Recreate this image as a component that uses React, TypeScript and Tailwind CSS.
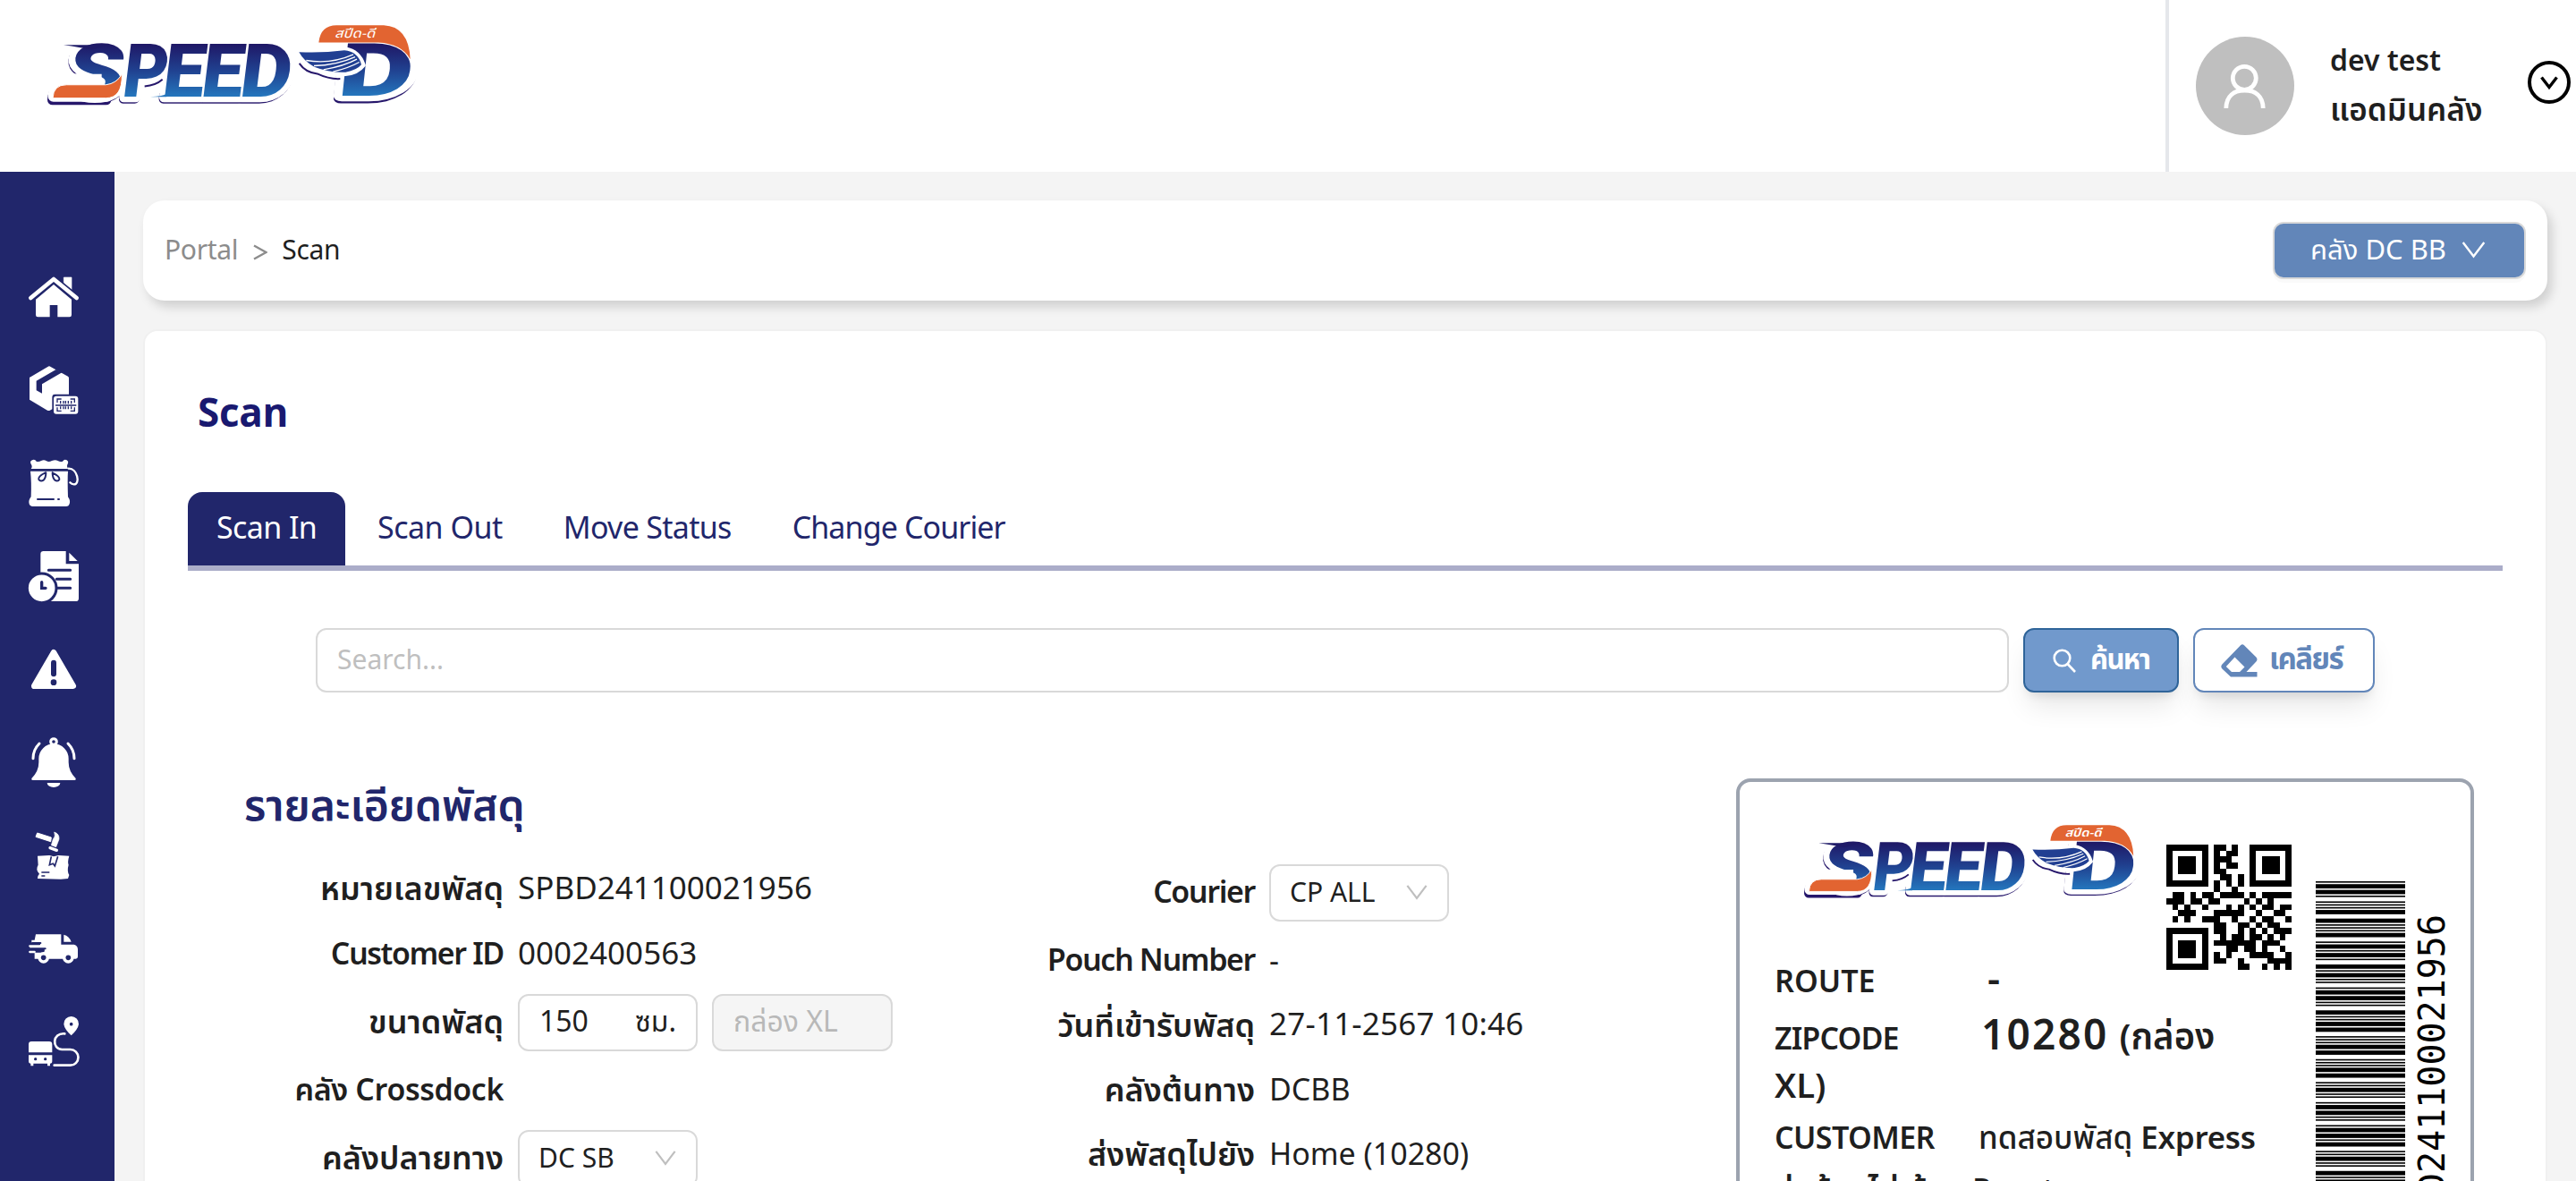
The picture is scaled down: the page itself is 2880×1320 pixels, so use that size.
import type { ReactNode } from "react";

/* ---------- Code 39 barcode ---------- */

const CODE39: Record<string, string> = {
  "0": "nnnwwnwnn", "1": "wnnwnnnnw", "2": "nnwwnnnnw", "3": "wnwwnnnnn", "4": "nnnwwnnnw",
  "5": "wnnwwnnnn", "6": "nnwwwnnnn", "7": "nnnwnnwnw", "8": "wnnwnnwnn", "9": "nnwwnnwnn",
  B: "nnwnnwnnw", D: "nnnnwwnnw", P: "nnwnwnnwn", S: "nnwnnnwwn", "*": "nwnnwnwnn",
};

function code39Bars(value: string) {
  const bars: { at: number; size: number }[] = [];
  let at = 0;
  for (const ch of `*${value}*`) {
    [...CODE39[ch]].forEach((kind, i) => {
      const size = kind === "w" ? 3 : 1;
      if (i % 2 === 0) bars.push({ at, size });
      at += size;
    });
    at += 1;
  }
  return { bars, total: at - 1 };
}

function Barcode({ value }: { value: string }) {
  const { bars, total } = code39Bars(value);
  return (
    <svg className="h-[460px] w-[100px] shrink-0" viewBox={`0 0 100 ${total}`} preserveAspectRatio="none">
      {bars.map((b) => (
        <rect key={b.at} x="0" width="100" y={total - b.at - b.size} height={b.size} fill="#000" />
      ))}
    </svg>
  );
}

/* ---------- QR code, version 1-Q, alphanumeric ---------- */

const ALNUM = "0123456789ABCDEFGHIJKLMNOPQRSTUVWXYZ $%*+-./:";
const FORMAT_BITS = "011010101011111";

function qrMatrix(text: string): boolean[][] {
  let bits = "0010" + text.length.toString(2).padStart(9, "0");
  for (let i = 0; i < text.length; i += 2) {
    const a = ALNUM.indexOf(text[i]);
    const b = ALNUM.indexOf(text[i + 1]);
    bits += (a * 45 + b).toString(2).padStart(11, "0");
  }
  bits = bits.padEnd(104, "0");
  const data: number[] = [];
  for (let i = 0; i < 104; i += 8) data.push(parseInt(bits.slice(i, i + 8), 2));

  const mul = (x: number, y: number) => {
    let z = 0;
    for (let i = 7; i >= 0; i--) {
      z = (z << 1) ^ ((z >>> 7) * 0x11d);
      z ^= ((y >>> i) & 1) * x;
    }
    return z;
  };
  const degree = 13;
  const divisor: number[] = Array(degree).fill(0);
  divisor[degree - 1] = 1;
  let root = 1;
  for (let i = 0; i < degree; i++) {
    for (let j = 0; j < degree; j++) {
      divisor[j] = mul(divisor[j], root);
      if (j + 1 < degree) divisor[j] ^= divisor[j + 1];
    }
    root = mul(root, 2);
  }
  const ecc: number[] = Array(degree).fill(0);
  for (const byte of data) {
    const factor = byte ^ (ecc.shift() as number);
    ecc.push(0);
    divisor.forEach((c, i) => (ecc[i] ^= mul(c, factor)));
  }
  const stream = [...data, ...ecc].map((b) => b.toString(2).padStart(8, "0")).join("");

  const n = 21;
  const m: (boolean | null)[][] = Array.from({ length: n }, () => Array(n).fill(null));
  const finder = (cr: number, cc: number) => {
    for (let dr = -4; dr <= 4; dr++)
      for (let dc = -4; dc <= 4; dc++) {
        const r = cr + dr;
        const c = cc + dc;
        if (r < 0 || c < 0 || r >= n || c >= n) continue;
        const d = Math.max(Math.abs(dr), Math.abs(dc));
        m[r][c] = d !== 2 && d !== 4;
      }
  };
  finder(3, 3);
  finder(3, n - 4);
  finder(n - 4, 3);
  for (let i = 8; i < 13; i++) m[6][i] = m[i][6] = i % 2 === 0;
  const f = (i: number) => FORMAT_BITS[14 - i] === "1";
  for (let i = 0; i <= 5; i++) m[i][8] = f(i);
  m[7][8] = f(6);
  m[8][8] = f(7);
  m[8][7] = f(8);
  for (let i = 9; i < 15; i++) m[8][14 - i] = f(i);
  for (let i = 0; i < 8; i++) m[8][n - 1 - i] = f(i);
  for (let i = 8; i < 15; i++) m[n - 15 + i][8] = f(i);
  m[n - 8][8] = true;

  let k = 0;
  for (let right = n - 1; right >= 1; right -= 2) {
    if (right === 6) right = 5;
    for (let v = 0; v < n; v++) {
      for (let j = 0; j < 2; j++) {
        const c = right - j;
        const upward = ((right + 1) & 2) === 0;
        const r = upward ? n - 1 - v : v;
        if (m[r][c] === null) {
          m[r][c] = (stream[k] === "1") !== ((r + c) % 2 === 0);
          k++;
        }
      }
    }
  }
  return m as boolean[][];
}

function QrCode({ value }: { value: string }) {
  const d = qrMatrix(value)
    .flatMap((row, y) => row.map((on, x) => (on ? `M${x} ${y}h1v1h-1z` : "")))
    .join("");
  return (
    <svg className="size-[140px] shrink-0" viewBox="0 0 21 21" shapeRendering="crispEdges">
      <path d={d} fill="#000" />
    </svg>
  );
}

/* ---------- Logo ---------- */

function LogoWord(props: { fill: string; stroke?: string; strokeWidth?: number; clipPath?: string }) {
  const font = { fontFamily: "Roboto, 'Noto Sans', sans-serif", fontWeight: 900 };
  return (
    <g {...props} {...font} fontSize="250" strokeLinejoin="round">
      <g transform="translate(0 293) skewX(-7)">
        <text transform="translate(102 0) scale(1.2 1)">S</text>
        <text transform="translate(286 0) scale(.92 1)">P</text>
        <text transform="translate(420 0)">E</text>
        <text transform="translate(550 0)">E</text>
        <text transform="translate(680 0) scale(1.06 1)">D</text>
      </g>
      <g transform="translate(0 291) skewX(-6)">
        <text transform="translate(1008 0) scale(1.56 .99)">D</text>
      </g>
    </g>
  );
}

function Logo({ id, className }: { id: string; className: string }) {
  const top = "M950 112Q956 54 1010 54H1168Q1252 58 1257 168Q1228 116 1150 112Z";
  return (
    <svg className={className} viewBox="40 50 1236 274" preserveAspectRatio="none">
      <defs>
        <linearGradient id={id} gradientUnits="userSpaceOnUse" x1="0" x2="0" y1="-178" y2="0">
          <stop offset="0" stopColor="#1f1765" />
          <stop offset=".5" stopColor="#20408f" />
          <stop offset="1" stopColor="#2476bd" />
        </linearGradient>
        <clipPath id={`${id}-inner`}>
          <path d="M180 90H835V283H180ZM1070 110H1205V283H1070Z" />
        </clipPath>
      </defs>
      <g transform="translate(-3 8)">
        <LogoWord fill="#26176b" stroke="#26176b" strokeWidth={34} />
        <path d="M60 297Q62 255 100 255H240V297Z" fill="#26176b" stroke="#26176b" strokeWidth="34" strokeLinejoin="round" />
      </g>
      <LogoWord fill="#fff" stroke="#fff" strokeWidth={38} />
      <LogoWord fill="#fff" stroke="#fff" strokeWidth={80} clipPath={`url(#${id}-inner)`} />
      <path d="M60 293Q62 251 100 251H240V293Z" fill="#fff" stroke="#fff" strokeWidth="36" strokeLinejoin="round" />
      <path d="M366 259Q404 256 426 236" fill="none" stroke="#26176b" strokeWidth="6" />
      <path d={top} fill="#fff" stroke="#fff" strokeWidth="24" />
      <LogoWord fill={`url(#${id})`} />
      <path d="M96 218H222V256H96Z" fill="#fff" />
      <path d="M94 120H240L190 136Q150 128 94 120Z" fill="#1f1b68" />
      <path d="M58 299Q60 254 104 254H236Q272 250 290 218Q292 299 236 299Z" fill="#e26431" stroke="#fff" strokeWidth="3" />
      <path d="M385 295Q430 292 440 284V295Z" fill="#2476bd" />
      <path d={top} fill="#e26431" />
      <text x="1003" y="95" fontSize="42" fontStyle="italic" fill="#fff" fontFamily="'Noto Sans Thai', 'Noto Sans', sans-serif" textLength="136" lengthAdjust="spacingAndGlyphs">
        สปีด-ดี
      </text>
      <path d="M872 138Q960 144 1040 134Q1085 142 1100 188Q1080 214 1040 218Q985 222 930 200Q892 178 872 138Z" fill="#fff" stroke="#fff" strokeWidth="14" />
      <path d="M884 144Q960 148 1036 138Q1082 142 1093 186Q1078 204 1040 212Q985 214 935 194Q900 174 884 144Z" fill="#213f92" />
      <path d="M908 172Q990 186 1066 152M934 190Q1010 188 1072 160M966 203Q1034 192 1078 168M998 210Q1050 198 1086 178" fill="none" stroke="#fff" strokeWidth="4" />
      <path d="M885 182Q905 212 945 217Q985 236 1022 234" fill="none" stroke="#26176b" strokeWidth="6" />
    </svg>
  );
}

/* ---------- Sidebar icons, drawn on a 168 unit box ---------- */

const NAVY = "#21266b";

const sidebarIcons: { name: string; art: ReactNode }[] = [
  {
    name: "Home",
    art: (
      <>
        <path d="M118 18H144V60L118 38Z" stroke="#fff" strokeWidth="2" strokeLinejoin="round" />
        <path d="M7 87L84 24L161 87" fill="none" stroke={NAVY} strokeWidth="24" strokeLinejoin="round" />
        <path d="M24 92L84 42L144 92V144Q144 151 137 151H97V111H71V151H31Q24 151 24 144Z" />
        <path d="M7 87L84 24L161 87" fill="none" stroke="#fff" strokeWidth="14" strokeLinecap="round" strokeLinejoin="round" />
      </>
    ),
  },
  {
    name: "Parcel scan",
    art: (
      <>
        <path d="M3 42L64 6Q69 2 74 6L132 38Q135 40 135 44V98H88Q79 98 79 108V148L70 153Q67 154 63 152L3 116Z" />
        <path d="M26 53L92 15L112 25L45 64V95L26 85Z" fill={NAVY} />
        <rect x="84" y="104" width="82" height="60" rx="9" />
        <path d="M96 126V114H110M140 114H154V126M154 142V154H140M110 154H96V142M90 135H160M107 120V130M117 120V130M124 120V130M133 120V130M143 120V130M107 139V148M117 139V148M124 139V148M133 139V148M143 139V148" fill="none" stroke={NAVY} strokeWidth="4" />
      </>
    ),
  },
  {
    name: "Pouch",
    art: (
      <>
        <path d="M8 36Q14 28 8 20Q2 10 14 6Q22 4 26 11Q34 14 42 9Q52 4 60 10Q68 14 78 9Q90 4 98 9Q106 14 114 11Q120 2 128 7Q136 12 130 22Q126 28 132 36Z" />
        <path d="M6 44H132Q130 70 132 130Q142 144 136 156Q134 162 126 162H12Q4 162 2 154Q-2 142 8 130Q10 80 6 44Z" />
        <path d="M134 35C164 34 174 88 152 88Q144 88 139 82" fill="none" stroke="#fff" strokeWidth="7" strokeLinecap="round" />
        <path d="M56 49Q30 62 34 72Q40 80 50 74Q58 66 58 49M80 49Q106 62 103 72Q98 80 88 74Q80 66 80 49M30 138H84M99 138H102" fill="none" stroke={NAVY} strokeWidth="6" strokeLinecap="round" />
      </>
    ),
  },
  {
    name: "Report",
    art: (
      <>
        <path d="M50 0H125V43H168V158Q168 168 158 168H40V10Q40 0 50 0Z" />
        <path d="M136 5L164 33H136Z" />
        <path d="M67 64H140M94 94H140M94 124H140" stroke={NAVY} strokeWidth="9" strokeLinecap="round" />
        <circle cx="44" cy="124" r="49" stroke={NAVY} strokeWidth="9" />
        <path d="M44 104V124H57" fill="none" stroke={NAVY} strokeWidth="10" strokeLinecap="round" />
      </>
    ),
  },
  {
    name: "Warning",
    art: (
      <>
        <path d="M84 28L149 140H19Z" stroke="#fff" strokeWidth="20" strokeLinejoin="round" />
        <path d="M84 62V100" stroke={NAVY} strokeWidth="18" strokeLinecap="round" />
        <circle cx="84" cy="128" r="10" fill={NAVY} />
      </>
    ),
  },
  {
    name: "Alerts",
    art: (
      <>
        <circle cx="84" cy="15" r="10" fill="none" stroke="#fff" strokeWidth="9" />
        <path d="M10 138Q34 114 34 84V72A50 50 0 0 1 134 72V84Q134 114 158 138Q160 144 154 144H14Q8 144 10 138Z" />
        <path d="M62 153H106A22 15 0 0 1 62 153Z" />
        <path d="M36 21Q15 42 15 71M132 21Q153 42 153 71" fill="none" stroke="#fff" strokeWidth="9" strokeLinecap="round" />
      </>
    ),
  },
  {
    name: "Damaged parcel",
    art: (
      <>
        <path d="M29 9L76 24L74 38L24 22Z" stroke="#fff" strokeWidth="3" strokeLinejoin="round" />
        <path d="M86 6Q104 12 102 30L92 56L76 50L82 30Q92 20 86 6Z" stroke="#fff" strokeWidth="2" />
        <path d="M72 59L94 67" stroke="#fff" strokeWidth="10" strokeLinecap="round" />
        <path d="M30 86L70 84L84 88L100 84L136 86Q130 106 134 116Q128 136 136 150L132 162L108 164L30 162Q28 154 36 146Q22 132 32 116Z" />
        <path d="M76 88L70 116L82 112L88 120L98 88" fill="none" stroke={NAVY} strokeWidth="5" />
        <path d="M43 141H70M43 153H55" stroke={NAVY} strokeWidth="4" />
      </>
    ),
  },
  {
    name: "Delivery",
    art: (
      <>
        <path d="M24 37H109V71H152Q165 74 165 88V112Q165 119 158 119H20V98H50Q56 94 52 84H6Q2 80 6 76H36Q42 72 38 66H10V56H20Z" />
        <path d="M4 76H40M4 96H20" stroke="#fff" strokeWidth="7" strokeLinecap="round" />
        <path d="M8 85H56M12 66H40" stroke={NAVY} strokeWidth="6" strokeLinecap="round" />
        <path d="M118 38Q136 42 143 62H118Z" />
        <circle cx="50" cy="115" r="19" />
        <circle cx="133" cy="115" r="19" />
        <circle cx="50" cy="115" r="8.5" fill={NAVY} />
        <circle cx="133" cy="115" r="8.5" fill={NAVY} />
      </>
    ),
  },
  {
    name: "Routes",
    art: (
      <>
        <path d="M143 0A25 25 0 0 1 168 26Q166 42 143 64Q120 42 118 26A25 25 0 0 1 143 0Z" />
        <circle cx="143" cy="26" r="5.5" fill={NAVY} />
        <path d="M121 58C78 54 78 111 112 111H140A26 26 0 0 1 140 164H86" fill="none" stroke="#fff" strokeWidth="8" strokeLinecap="round" />
        <path d="M10 84H69Q79 84 79 94V121H0V94Q0 84 10 84ZM0 130H79V150Q79 158 72 158V166H63V158H16V166H7V158Q0 158 0 150Z" />
        <circle cx="23" cy="143" r="5" fill={NAVY} />
        <circle cx="56" cy="143" r="5" fill={NAVY} />
      </>
    ),
  },
];

function Sidebar() {
  return (
    <nav className="flex w-32 shrink-0 flex-col gap-12 bg-[#21266b] pt-28 pl-8">
      {sidebarIcons.map(({ name, art }) => (
        <svg key={name} aria-label={name} className="size-14 shrink-0 overflow-visible" viewBox="0 0 168 168" fill="#fff">
          {art}
        </svg>
      ))}
    </nav>
  );
}

/* ---------- Small pieces ---------- */

function Chevron({ className }: { className: string }) {
  return (
    <svg className={className} viewBox="0 0 26 20" fill="none" stroke="currentColor" strokeWidth="2.4">
      <path d="M1.2 1L13 16.5L24.8 1" />
    </svg>
  );
}

function SelectBox({ children }: { children: ReactNode }) {
  return (
    <div className="flex h-16 w-[201px] items-center justify-between rounded-xl border-2 border-[#d9d9d9] pr-[22px] pl-[21px] text-[30px] leading-[44px]">
      <span className="pt-px">{children}</span>
      <Chevron className="h-[18px] w-6 text-[#bfbfbf]" />
    </div>
  );
}

function Row({ label, h, labelClass, children }: { label: string; h: string; labelClass?: string; children?: ReactNode }) {
  return (
    <div className={`flex shrink-0 items-center gap-[16px] whitespace-nowrap ${h}`}>
      <div className={`w-[288px] pt-px text-right leading-[56px] font-semibold ${labelClass ?? "text-[36px]"}`}>{label}</div>
      {children}
    </div>
  );
}

const LATIN = "text-[34px] tracking-[-1.4px]";

function Header() {
  return (
    <header className="flex h-48 shrink-0 justify-between bg-white">
      <Logo id="logo-header" className="mt-[27px] ml-[53px] h-[91px] w-[412px]" />
      <div className="flex w-[459px] border-l-4 border-[#e5e7eb] pl-[30px]">
        <svg className="mt-[41px] size-[110px] shrink-0" viewBox="0 0 110 110" fill="none">
          <circle cx="55" cy="55" r="55" fill="#bfbfbf" />
          <circle cx="54.3" cy="46.3" r="13" stroke="#fff" strokeWidth="4.8" />
          <path d="M33.8 80C34 66 43 60 54.5 60S75 66 75.2 80" stroke="#fff" strokeWidth="4.8" />
        </svg>
        <div className="mt-10 ml-10 w-[243px] shrink-0 font-semibold whitespace-nowrap">
          <div className="text-[32px] leading-[58px]">dev test</div>
          <div className="text-[35px] leading-[54px]">แอดมินคลัง</div>
        </div>
        <svg className="mt-[68px] -ml-[22px] size-12 shrink-0" viewBox="0 0 48 48" fill="none" stroke="#000" strokeWidth="4">
          <circle cx="24" cy="24" r="22" />
          <path d="M15.5 18.5L24 29.5L32.5 18.5" strokeWidth="3.4" />
        </svg>
      </div>
    </header>
  );
}

function BreadcrumbBar() {
  return (
    <div className="flex h-28 shrink-0 items-center justify-between rounded-3xl bg-white pr-6 pl-6 text-[30px] shadow-[5px_7px_12px_rgba(0,0,0,0.15)]">
      <div className="flex items-center pt-0.5 leading-[56px] text-[#8c8c8c]">
        <span className="tracking-[-0.3px]">Portal</span>
        <svg className="mt-0.5 mr-4 ml-[17px] h-[18px] w-4" viewBox="0 0 16 18" fill="none" stroke="currentColor" strokeWidth="2.4">
          <path d="M1 1.5L14.5 9L1 16.5" />
        </svg>
        <span className="tracking-[-0.3px] text-[#1f1f1f]">Scan</span>
      </div>
      <button className="flex h-16 w-[283px] items-center rounded-xl border-2 border-[#d9d9d9] bg-[#6286b9] pl-10 text-[31px] leading-[44px] text-white shadow-[0_4px_0_rgba(0,0,0,0.02)]">
        <span className="w-[169px] pt-0.5 text-left whitespace-nowrap">คลัง DC BB</span>
        <Chevron className="h-5 w-[27px]" />
      </button>
    </div>
  );
}

function Tabs() {
  const tab = "flex h-[82px] items-center px-8 pt-px leading-[56px]";
  return (
    <div className="mt-[57px] mr-12 ml-12 flex gap-1 border-b-[6px] border-[#abadc9] text-[34px] text-[#21266b]">
      <div className={`${tab} w-44 rounded-t-2xl bg-[#21266b] tracking-[-0.6px] whitespace-nowrap text-white`}>Scan In</div>
      <div className={`${tab} tracking-[-0.5px]`}>Scan Out</div>
      <div className={`${tab} tracking-[-0.7px]`}>Move Status</div>
      <div className={`${tab} tracking-[-0.9px]`}>Change Courier</div>
    </div>
  );
}

function SearchRow() {
  const button =
    "flex h-[72px] items-center rounded-xl border-2 font-bold whitespace-nowrap shadow-[0_20px_30px_-6px_rgba(0,0,0,0.1),0_8px_12px_-6px_rgba(0,0,0,0.12)]";
  return (
    <div className="mt-16 ml-[191px] flex gap-4">
      <div className="flex h-[72px] w-[1893px] items-center rounded-xl border-2 border-[#d9d9d9] pt-0.5 pl-[22px] text-[30px] text-[#bfbfbf]">
        Search...
      </div>
      <button className={`${button} w-[174px] border-[#2f6499] bg-[#7199cc] pl-[31px] text-[31px] text-white`}>
        <svg className="size-[27px] shrink-0" viewBox="0 0 27 27" fill="none" stroke="currentColor" strokeWidth="2.6">
          <circle cx="10.5" cy="10.5" r="8.8" />
          <path d="M16.5 17L25 26" />
        </svg>
        <span className="ml-[15px] pt-0.5 tracking-[-1.6px]">ค้นหา</span>
      </button>
      <button className={`${button} w-[203px] border-[#6286b9] bg-white pl-[29px] text-[33px] text-[#6286b9]`}>
        <svg className="h-[37px] w-[41px] shrink-0" viewBox="0 0 41 37" fill="currentColor">
          <path fillRule="evenodd" d="M22 1.2Q24 -.6 26 1.2L39.4 14.6Q41.6 17 39.4 19.4L28.5 31H40.5V36.5H11L1.4 27.4Q-.8 25 1.4 22.6ZM15.5 14.5L5.8 25L12 31H21L26.5 25.6Z" />
        </svg>
        <span className="ml-[13px] pt-0.5 tracking-[-1.5px]">เคลียร์</span>
      </button>
    </div>
  );
}

function ParcelLabel() {
  const key = "inline-block text-[34px]";
  return (
    <div className="flex h-[560px] w-[825px] shrink-0 rounded-2xl border-4 border-[#9ca3af] bg-white pl-[39px]">
      <div className="w-[605px] shrink-0 font-semibold whitespace-nowrap">
        <div className="flex h-[210px]">
          <Logo id="logo-label" className="mt-[47px] ml-[33px] h-[83px] w-[374px] shrink-0" />
          <div className="mt-[70px] ml-[31px]">
            <QrCode value="SPBD241100021956" />
          </div>
        </div>
        <div className="-mt-4 h-14 leading-[56px]">
          <span className={`${key} w-[238px]`}>ROUTE</span>
          <span className="text-[44px] leading-[56px]">-</span>
        </div>
        <div className="flex h-[71px] items-baseline leading-[71px]">
          <span className={`${key} w-[231px] tracking-[-0.9px]`}>ZIPCODE</span>
          <span className="text-[46px] tracking-[2.2px]">10280</span>
          <span className="ml-3 text-[40px]">(กล่อง</span>
        </div>
        <div className="h-[42px] text-[38px] leading-[42px]">XL)</div>
        <div className="flex h-[74px] items-baseline leading-[74px]">
          <span className={`${key} w-[228px] tracking-[-0.6px]`}>CUSTOMER</span>
          <span className="text-[35px] font-medium">
            ทดสอบพัสดุ <span className="font-semibold tracking-[-0.3px]">Express</span>
          </span>
        </div>
        <div className="flex h-10 items-baseline leading-[40px]">
          <span className="w-[221px] text-[36px]">ส่งด้วยไม่เข้า</span>
          <span className="text-[34px]">Reset</span>
        </div>
      </div>
      <div className="mt-[111px] flex h-[460px] items-center gap-[10px]">
        <Barcode value="SPBD241100021956" />
        <div className="w-10 rotate-180 font-['DejaVu_Sans_Mono',monospace] text-[40px] leading-[40px] text-black [writing-mode:vertical-rl]">
          SPBD241100021956
        </div>
      </div>
    </div>
  );
}

function ParcelDetails() {
  return (
    <div className="mt-24 ml-[113px] flex h-[460px]">
      <div className="w-[840px] shrink-0">
        <h2 className="-mt-0.5 mb-5 -ml-0.5 h-[70px] text-[48px] leading-[70px] font-semibold tracking-[-0.1px] text-[#21266b]">รายละเอียดพัสดุ</h2>
        <Row label="หมายเลขพัสดุ" h="h-[73px]">
          <span className="pt-0.5 text-[35px]">SPBD241100021956</span>
        </Row>
        <Row label="Customer ID" h="h-[73px]" labelClass={LATIN}>
          <span className="pt-px text-[35px]">0002400563</span>
        </Row>
        <Row label="ขนาดพัสดุ" h="h-[78px]">
          <div className="flex gap-4 text-[32px] leading-[44px]">
            <div className="flex h-16 w-[201px] items-center justify-between rounded-xl border-2 border-[#d9d9d9] px-[22px]">
              <span>150</span>
              <span>ซม.</span>
            </div>
            <div className="flex h-16 w-[202px] items-center rounded-xl border-2 border-[#d9d9d9] bg-[#f5f5f5] px-[22px] text-[#b8b8b8]">กล่อง XL</div>
          </div>
        </Row>
        <Row label="คลัง Crossdock" h="h-[75px]" labelClass="text-[34px] tracking-[-0.4px]" />
        <Row label="คลังปลายทาง" h="h-[76px]">
          <SelectBox>DC SB</SelectBox>
        </Row>
      </div>
      <div className="w-[826px] shrink-0 pt-[88px]">
        <Row label="Courier" h="h-[80px]" labelClass={LATIN}>
          <SelectBox>CP ALL</SelectBox>
        </Row>
        <Row label="Pouch Number" h="h-[73px]" labelClass={LATIN}>
          <span className="pt-px text-[34px]">-</span>
        </Row>
        <Row label="วันที่เข้ารับพัสดุ" h="h-[72px]">
          <span className="pt-px text-[35px] tracking-[0.2px]">27-11-2567 10:46</span>
        </Row>
        <Row label="คลังต้นทาง" h="h-[72px]">
          <span className="pt-px text-[34px]">DCBB</span>
        </Row>
        <Row label="ส่งพัสดุไปยัง" h="h-[72px]">
          <span className="pt-px text-[34px]">Home (10280)</span>
        </Row>
      </div>
      <ParcelLabel />
    </div>
  );
}

export default function App() {
  return (
    <div className="flex h-[1320px] w-[2880px] flex-col overflow-hidden bg-[#f4f4f4] font-['Noto_Sans_Thai','Noto_Sans',sans-serif] text-[#1f1f1f]">
      <Header />
      <div className="flex min-h-0 flex-1">
        <Sidebar />
        <main className="flex min-w-0 flex-1 flex-col gap-8 pt-8 pr-8 pl-8">
          <BreadcrumbBar />
          <section className="h-[1200px] shrink-0 rounded-2xl border-2 border-[#f0f0f0] bg-white pt-16">
            <h1 className="ml-[59px] h-[59px] text-[44px] leading-[60px] font-bold tracking-[-0.3px] text-[#191970]">Scan</h1>
            <Tabs />
            <SearchRow />
            <ParcelDetails />
          </section>
        </main>
      </div>
    </div>
  );
}
